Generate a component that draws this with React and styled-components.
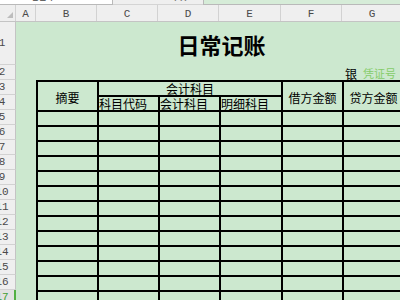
import styled, { createGlobalStyle } from 'styled-components';

const GREEN = '#cce8cf';
const HEAD_BG = '#efefef';
const HEAD_LINE = '#d2d2d2';
const CJK = '"Noto Sans CJK SC", "Noto Sans", sans-serif';
const MONO = '"Liberation Mono", "DejaVu Sans Mono", monospace';

const GlobalStyle = createGlobalStyle`
  html, body {
    margin: 0;
    padding: 0;
    width: 400px;
    height: 300px;
    overflow: hidden;
    background: ${GREEN};
  }
  * { box-sizing: border-box; }
`;

const Window = styled.div`
  width: 400px;
  height: 300px;
  overflow: hidden;
  display: flex;
  flex-direction: column;
`;

// formula bar, only its lower edge is visible
const FormulaBar = styled.div`
  height: 5px;
  flex-shrink: 0;
  display: flex;
  background: ${HEAD_BG};
  overflow: hidden;
`;

const NameBox = styled.div`
  width: 113px;
  background: #fff;
  border-right: 1px solid #b9b9b9;
  border-bottom: 1px solid #b9b9b9;
  display: flex;
  align-items: flex-end;
  padding-left: 32px;
  font: 12px/12px ${MONO};
  color: #666;
`;

const Tools = styled.div`
  width: 90px;
  display: flex;
  align-items: flex-end;
  padding-left: 45px;
  font: 12px/12px ${MONO};
  color: #777;
  border-bottom: 1px solid #d4d4d4;
`;

const FormulaInput = styled.div`
  flex: 1;
  background: #d6ecd8;
  border-left: 1px solid #b9b9b9;
  border-bottom: 1px solid #b9b9b9;
`;

const ColumnHeader = styled.div`
  height: 17px;
  flex-shrink: 0;
  display: flex;
  background: ${HEAD_BG};
  border-bottom: 1px solid #c4c4c4;
`;

const ColLabel = styled.div`
  width: ${({ w }) => w}px;
  flex-shrink: 0;
  border-right: 1px solid ${HEAD_LINE};
  display: flex;
  align-items: center;
  justify-content: center;
  padding-top: 2px;
  font: 11px ${MONO};
  color: #4a4a4a;
`;

const Corner = styled(ColLabel)`
  position: relative;
  svg { position: absolute; left: 0; top: 0; }
`;

const Body = styled.div`
  flex: 1;
  display: grid;
  grid-template-columns: 16px 20px 61px 61px 61px 62px 61px 61px;
  grid-template-rows: 43px repeat(17, 15px);
  background: ${GREEN};
  overflow: hidden;
`;

const RowLabel = styled.div`
  grid-column: 1;
  background: ${({ active }) => (active ? '#e2e2e2' : HEAD_BG)};
  border-bottom: 1px solid ${HEAD_LINE};
  border-right: ${({ active }) => (active ? '2px solid #52b043' : '1px solid #c4c4c4')};
  display: flex;
  align-items: center;
  overflow: hidden;
  font: 11px ${MONO};
  color: ${({ active }) => (active ? '#3f9e32' : '#4a4a4a')};
  span {
    flex-shrink: 0;
    width: 28px;
    margin-left: -12px;
    text-align: center;
  }
`;

const Title = styled.div`
  grid-column: 3 / -1;
  grid-row: 1;
  display: flex;
  align-items: center;
  justify-content: center;
  padding-left: 4px;
  font: bold 22px ${CJK};
  color: #000;
`;

const VoucherCell = styled.div`
  grid-column: 8;
  grid-row: 2;
  display: flex;
  align-items: flex-end;
  gap: 6px;
  padding-left: 3px;
  white-space: nowrap;
  font: 12px/13px ${CJK};
  color: #000;
`;

const VoucherNo = styled.span`
  color: #86cc6a;
  font-size: 11px;
`;

const Ledger = styled.div`
  grid-column: 3 / -1;
  grid-row: 3 / -1;
  display: grid;
  grid-template-columns: 61px 61px 61px 62px 61px 61px;
  grid-template-rows: repeat(17, 15px);
`;

const Cell = styled.div`
  grid-column: ${({ col }) => col};
  grid-row: ${({ row }) => row};
  border-top: 2px solid #000;
  border-left: 2px solid #000;
  display: flex;
  align-items: ${({ bottom }) => (bottom ? 'flex-end' : 'center')};
  justify-content: ${({ left }) => (left ? 'flex-start' : 'center')};
  padding-top: ${({ bottom }) => (bottom ? 0 : 2)}px;
  font: 12px/13px ${CJK};
  color: #000;
  white-space: nowrap;
  overflow: hidden;
`;

const columns = [
  ['A', 20],
  ['B', 61],
  ['C', 61],
  ['D', 61],
  ['E', 62],
  ['F', 61],
  ['G', 61],
];

const rowNumbers = Array.from({ length: 18 }, (_, i) => i + 1);
const bodyRows = Array.from({ length: 14 }, (_, i) => i + 3);

export default function App() {
  return (
    <Window>
      <GlobalStyle />
      <FormulaBar>
        <NameBox>B24</NameBox>
        <Tools>✓ fx</Tools>
        <FormulaInput />
      </FormulaBar>

      <ColumnHeader>
        <Corner w={16}>
          <svg width="16" height="16" viewBox="0 0 16 16">
            <polygon points="13,7 13,13 7,13" fill="#bdbdbd" />
          </svg>
        </Corner>
        {columns.map(([name, w]) => (
          <ColLabel key={name} w={w}>
            {name}
          </ColLabel>
        ))}
      </ColumnHeader>

      <Body>
        {rowNumbers.map((n) => (
          <RowLabel key={n} active={n === 17} style={{ gridRow: n }}>
            <span>{n}</span>
          </RowLabel>
        ))}

        <Title>日常记账</Title>
        <VoucherCell>
          银<VoucherNo>凭证号</VoucherNo>
        </VoucherCell>

        <Ledger>
          <Cell col="1" row="1 / 3">摘要</Cell>
          <Cell col="2 / 5" row="1" bottom>会计科目</Cell>
          <Cell col="2" row="2" bottom left>科目代码</Cell>
          <Cell col="3" row="2" bottom left>会计科目</Cell>
          <Cell col="4" row="2" bottom left>明细科目</Cell>
          <Cell col="5" row="1 / 3">借方金额</Cell>
          <Cell col="6" row="1 / 3">贷方金额</Cell>
          {bodyRows.map((r) =>
            [1, 2, 3, 4, 5, 6].map((c) => (
              <Cell key={`${r}-${c}`} col={c} row={r} />
            ))
          )}
        </Ledger>
      </Body>
    </Window>
  );
}
